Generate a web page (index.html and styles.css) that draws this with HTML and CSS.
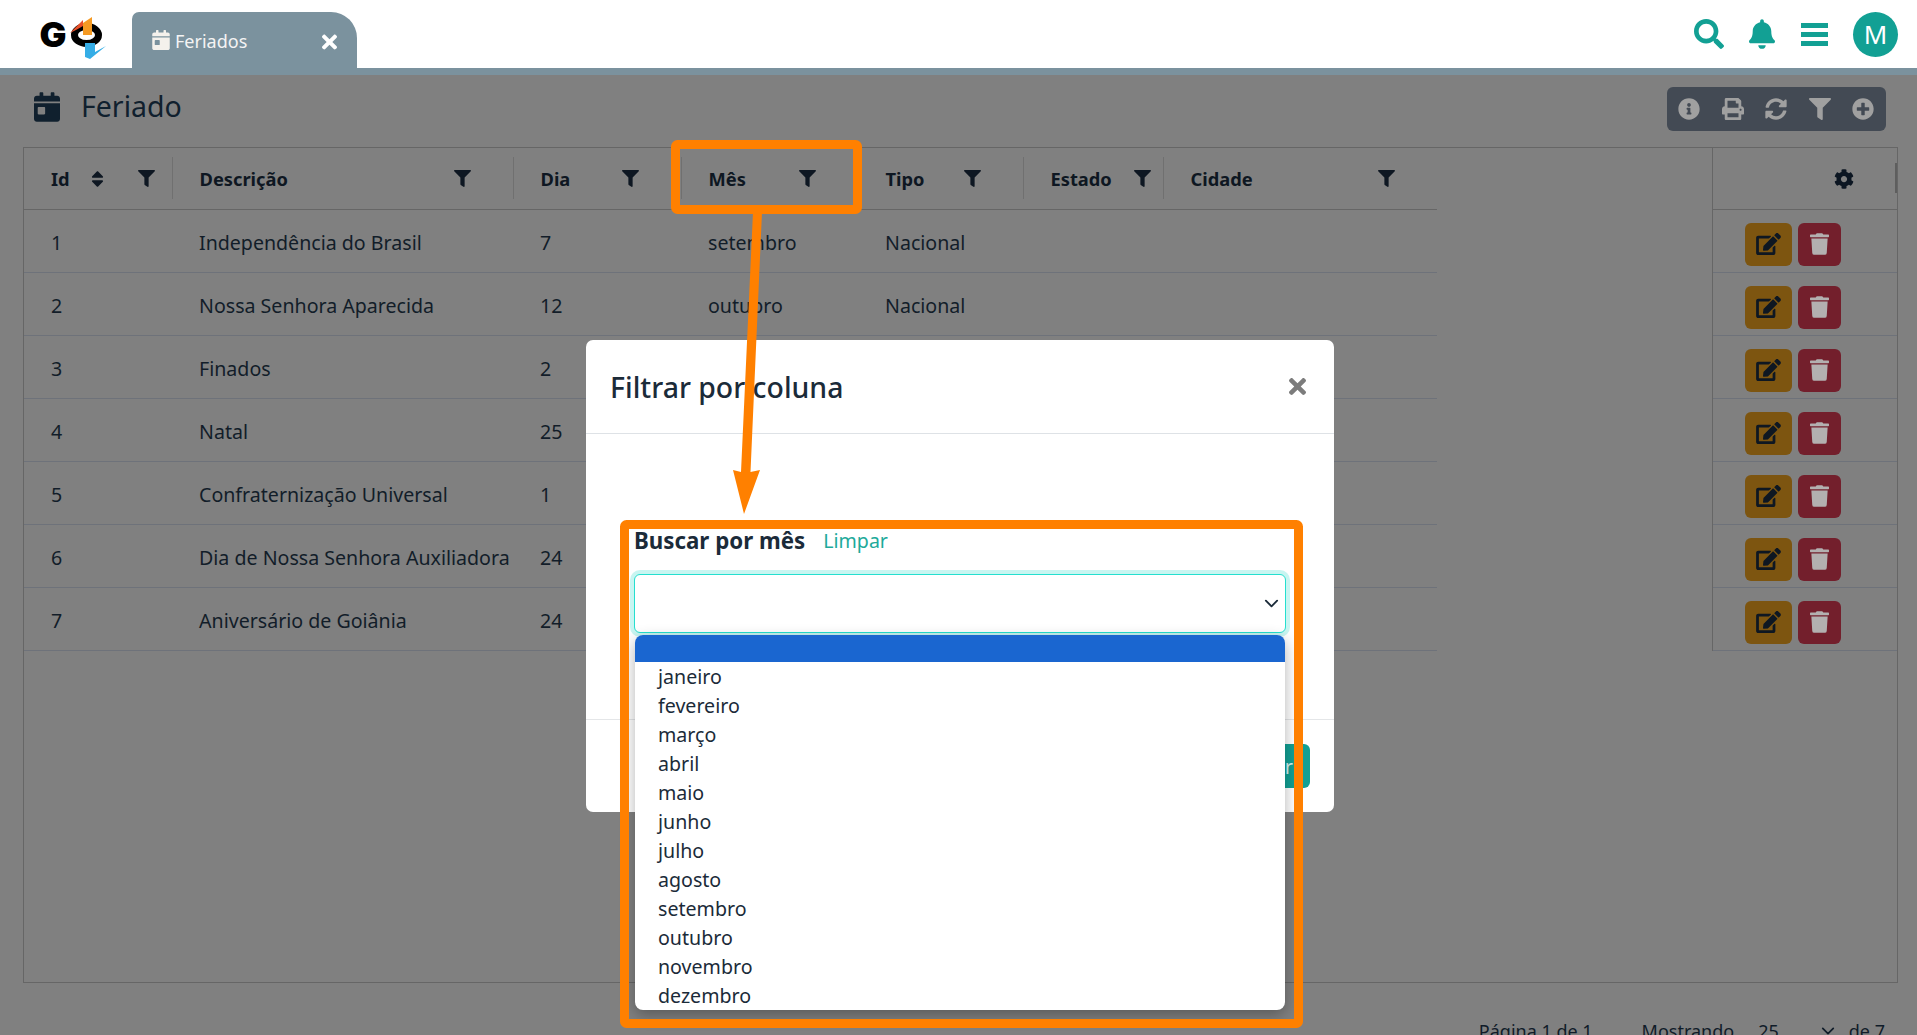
FILE: index.html
```html
<!DOCTYPE html>
<html lang="pt-BR">
<head>
<meta charset="utf-8">
<title>Feriados</title>
<link rel="stylesheet" href="styles.css">
</head>
<body>
<svg class="defs" width="0" height="0" aria-hidden="true">
  <symbol id="i-search" viewBox="0 0 512 512"><path d="M505 442.7L405.3 343c-4.5-4.5-10.6-7-17-7H372c27.6-35.3 44-79.7 44-128C416 93.1 322.9 0 208 0S0 93.1 0 208s93.1 208 208 208c48.3 0 92.7-16.4 128-44v16.3c0 6.4 2.5 12.5 7 17l99.7 99.7c9.4 9.4 24.6 9.4 33.9 0l28.3-28.3c9.4-9.4 9.4-24.6.1-34zM208 336c-70.7 0-128-57.2-128-128 0-70.7 57.2-128 128-128 70.7 0 128 57.2 128 128 0 70.7-57.2 128-128 128z"/></symbol>
  <symbol id="i-bell" viewBox="0 0 448 512"><path d="M224 512c35.32 0 63.97-28.65 63.97-64H160.03c0 35.35 28.65 64 63.97 64zm215.39-149.71c-19.32-20.76-55.47-51.99-55.47-154.29 0-77.7-54.48-139.9-127.94-155.16V32c0-17.67-14.32-32-31.98-32s-31.98 14.33-31.98 32v20.84C118.56 68.1 64.08 130.3 64.08 208c0 102.3-36.15 133.53-55.47 154.29-6 6.45-8.66 14.16-8.61 21.71.11 16.4 12.98 32 32.1 32h383.8c19.12 0 32-15.6 32.1-32 .05-7.55-2.61-15.27-8.61-21.71z"/></symbol>
  <symbol id="i-filter" viewBox="0 0 512 512"><path d="M487.976 0H24.028C2.71 0-8.047 25.866 7.058 40.971L192 225.941V432c0 7.831 3.821 15.17 10.237 19.662l80 55.98C298.02 518.69 320 507.493 320 487.98V225.941l184.947-184.97C520.021 25.896 509.338 0 487.976 0z"/></symbol>
  <symbol id="i-cal" viewBox="0 0 448 512"><path d="M0 464c0 26.5 21.5 48 48 48h352c26.5 0 48-21.5 48-48V192H0v272zm64-192c0-8.8 7.2-16 16-16h96c8.8 0 16 7.2 16 16v96c0 8.8-7.2 16-16 16H80c-8.8 0-16-7.2-16-16v-96zM400 64h-48V16c0-8.8-7.2-16-16-16h-32c-8.8 0-16 7.2-16 16v48H160V16c0-8.8-7.2-16-16-16h-32c-8.8 0-16 7.2-16 16v48H48C21.5 64 0 85.5 0 112v48h448v-48c0-26.5-21.5-48-48-48z"/></symbol>
  <symbol id="i-info" viewBox="0 0 512 512"><path d="M256 8C119.043 8 8 119.083 8 256c0 136.997 111.043 248 248 248s248-111.003 248-248C504 119.083 392.957 8 256 8zm0 110c23.196 0 42 18.804 42 42s-18.804 42-42 42-42-18.804-42-42 18.804-42 42-42zm56 254c0 6.627-5.373 12-12 12h-88c-6.627 0-12-5.373-12-12v-24c0-6.627 5.373-12 12-12h12v-64h-12c-6.627 0-12-5.373-12-12v-24c0-6.627 5.373-12 12-12h64c6.627 0 12 5.373 12 12v100h12c6.627 0 12 5.373 12 12v24z"/></symbol>
  <symbol id="i-print" viewBox="0 0 512 512"><path d="M448 192V77.25c0-8.49-3.37-16.62-9.37-22.63L393.37 9.37c-6-6-14.14-9.37-22.63-9.37H96C78.33 0 64 14.33 64 32v160c-35.35 0-64 28.65-64 64v112c0 8.84 7.16 16 16 16h48v96c0 17.67 14.33 32 32 32h320c17.67 0 32-14.33 32-32v-96h48c8.84 0 16-7.16 16-16V256c0-35.35-28.65-64-64-64zm-64 256H128v-96h256v96zm0-224H128V64h192v48c0 8.84 7.16 16 16 16h48v96zm48 72c-13.25 0-24-10.75-24-24 0-13.26 10.75-24 24-24s24 10.74 24 24c0 13.25-10.75 24-24 24z"/></symbol>
  <symbol id="i-sync" viewBox="0 0 512 512"><path d="M370.72 133.28C339.458 104.008 298.888 87.962 255.848 88c-77.458.068-144.328 53.178-162.791 126.85-1.344 5.363-6.122 9.15-11.651 9.15H24.103c-7.498 0-13.194-6.807-11.807-14.176C33.933 94.924 134.813 8 256 8c66.448 0 126.791 26.136 171.315 68.685L463.03 40.97C478.149 25.851 504 36.559 504 57.941V192c0 13.255-10.745 24-24 24H345.941c-21.382 0-32.09-25.851-16.971-40.971l41.75-41.749zM32 296h134.059c21.382 0 32.09 25.851 16.971 40.971l-41.75 41.75c31.262 29.273 71.835 45.319 114.876 45.28 77.418-.07 144.315-53.144 162.787-126.849 1.344-5.363 6.122-9.15 11.651-9.15h57.304c7.498 0 13.194 6.807 11.807 14.176C478.067 417.076 377.187 504 256 504c-66.448 0-126.791-26.136-171.315-68.685L48.97 471.03C33.851 486.149 8 475.441 8 454.059V320c0-13.255 10.745-24 24-24z"/></symbol>
  <symbol id="i-plus" viewBox="0 0 512 512"><path d="M256 8C119 8 8 119 8 256s111 248 248 248 248-111 248-248S393 8 256 8zm144 276c0 6.6-5.4 12-12 12h-92v92c0 6.6-5.4 12-12 12h-56c-6.6 0-12-5.4-12-12v-92h-92c-6.6 0-12-5.4-12-12v-56c0-6.6 5.4-12 12-12h92v-92c0-6.6 5.4-12 12-12h56c6.6 0 12 5.4 12 12v92h92c6.6 0 12 5.4 12 12v56z"/></symbol>
  <symbol id="i-cog" viewBox="0 0 512 512"><path d="M487.4 315.7l-42.6-24.6c4.3-23.2 4.3-47 0-70.2l42.6-24.6c4.9-2.8 7.1-8.6 5.5-14-11.1-35.6-30-67.8-54.7-94.6-3.8-4.1-10-5.1-14.8-2.3L380.8 110c-17.9-15.4-38.5-27.3-60.8-35.1V25.8c0-5.6-3.9-10.5-9.4-11.7-36.7-8.2-74.3-7.8-109.2 0-5.5 1.2-9.4 6.1-9.4 11.7V75c-22.2 7.9-42.8 19.8-60.8 35.1L88.7 85.5c-4.9-2.8-11-1.9-14.8 2.3-24.7 26.7-43.6 58.9-54.7 94.6-1.7 5.4.6 11.2 5.5 14L67.3 221c-4.3 23.2-4.3 47 0 70.2l-42.6 24.6c-4.9 2.8-7.1 8.6-5.5 14 11.1 35.6 30 67.8 54.7 94.6 3.8 4.1 10 5.1 14.8 2.3l42.6-24.6c17.9 15.4 38.5 27.3 60.8 35.1v49.2c0 5.6 3.9 10.5 9.4 11.7 36.7 8.2 74.3 7.8 109.2 0 5.5-1.2 9.4-6.1 9.4-11.7v-49.2c22.2-7.9 42.8-19.8 60.8-35.1l42.6 24.6c4.9 2.8 11 1.9 14.8-2.3 24.7-26.7 43.6-58.9 54.7-94.6 1.5-5.5-.7-11.3-5.6-14.1zM256 336c-44.1 0-80-35.9-80-80s35.9-80 80-80 80 35.9 80 80-35.9 80-80 80z"/></symbol>
  <symbol id="i-edit" viewBox="0 0 576 512"><path d="M402.6 83.2l90.2 90.2c3.8 3.8 3.8 10 0 13.8L274.4 405.6l-92.8 10.3c-12.4 1.4-22.9-9.1-21.5-21.5l10.3-92.8L388.8 83.2c3.8-3.8 10-3.8 13.8 0zm162-22.9l-48.8-48.8c-15.2-15.2-39.9-15.2-55.2 0l-35.4 35.4c-3.8 3.8-3.8 10 0 13.8l90.2 90.2c3.8 3.8 10 3.8 13.8 0l35.4-35.4c15.2-15.3 15.2-40 0-55.2zM384 346.2V448H64V128h229.8c3.2 0 6.2-1.3 8.5-3.5l40-40c7.6-7.6 2.2-20.5-8.5-20.5H48C21.5 64 0 85.5 0 112v352c0 26.5 21.5 48 48 48h352c26.5 0 48-21.5 48-48V306.2c0-10.7-12.9-16-20.5-8.5l-40 40c-2.2 2.3-3.5 5.3-3.5 8.5z"/></symbol>
  <symbol id="i-trash" viewBox="0 0 448 512"><path d="M432 32H312l-9.4-18.7A24 24 0 0 0 281.1 0H166.8a23.72 23.72 0 0 0-21.4 13.3L136 32H16A16 16 0 0 0 0 48v32a16 16 0 0 0 16 16h416a16 16 0 0 0 16-16V48a16 16 0 0 0-16-16zM53.2 467a48 48 0 0 0 47.9 45h245.8a48 48 0 0 0 47.9-45L416 128H32z"/></symbol>
  <symbol id="i-times" viewBox="0 0 352 512"><path d="M242.72 256l100.07-100.07c12.28-12.28 12.28-32.19 0-44.48l-22.24-22.24c-12.28-12.28-32.19-12.28-44.48 0L176 189.28 75.93 89.21c-12.28-12.28-32.19-12.28-44.48 0L9.21 111.45c-12.28 12.28-12.28 32.19 0 44.48L109.28 256 9.21 356.07c-12.28 12.28-12.28 32.19 0 44.48l22.24 22.24c12.28 12.28 32.2 12.28 44.48 0L176 322.72l100.07 100.07c12.28 12.28 32.2 12.28 44.48 0l22.24-22.24c12.28-12.28 12.28-32.19 0-44.48L242.72 256z"/></symbol>
  <symbol id="i-sort" viewBox="0 0 320 512"><path d="M41 288h238c21.4 0 32.1 25.9 17 41L177 448c-9.4 9.4-24.6 9.4-33.9 0L24 329c-15.1-15.1-4.4-41 17-41zm255-105L177 64c-9.4-9.4-24.6-9.4-33.9 0L24 183c-15.1 15.1-4.4 41 17 41h238c21.4 0 32.1-25.9 17-41z"/></symbol>
  <symbol id="i-chev" viewBox="0 0 16 16"><path d="M2 5l6 6 6-6" fill="none" stroke="currentColor" stroke-width="2" stroke-linecap="round" stroke-linejoin="round"/></symbol>
</svg>

<header class="topbar">
  <div class="logo">
    <svg class="logo-svg" viewBox="0 0 90 60">
      <text class="logo-g" x="9.5" y="37" textLength="27" lengthAdjust="spacingAndGlyphs">G</text>
      <ellipse cx="56.5" cy="25" rx="12" ry="8.5" fill="none" stroke="#000" stroke-width="7"/>
      <path d="M40 23l13-13v6l-7 4z" fill="#e8502a"/>
      <path d="M53 13l9-6v18h-9z" fill="#f59a23"/>
      <path d="M55 33h10v9l11-6-16 13-5-2z" fill="#35ade6"/>
    </svg>
  </div>
  <div class="tab">
    <svg class="tab-cal"><use href="#i-cal"/></svg>
    <span class="tab-label">Feriados</span>
    <svg class="tab-x"><use href="#i-times"/></svg>
  </div>
  <div class="top-actions">
    <svg class="ti ti-search"><use href="#i-search"/></svg>
    <svg class="ti ti-bell"><use href="#i-bell"/></svg>
    <div class="ti-bars"><span></span><span></span><span></span></div>
    <div class="avatar">M</div>
  </div>
</header>
<div class="strip"></div>

<main class="page">
  <div class="title-row">
    <h1 class="title"><svg class="title-cal"><use href="#i-cal"/></svg>Feriado</h1>
    <div class="toolbar">
      <svg class="tb"><use href="#i-info"/></svg>
      <svg class="tb"><use href="#i-print"/></svg>
      <svg class="tb"><use href="#i-sync"/></svg>
      <svg class="tb"><use href="#i-filter"/></svg>
      <svg class="tb"><use href="#i-plus"/></svg>
    </div>
  </div>

  <section class="card">
    <table class="data">
      <colgroup>
        <col class="c-id"><col class="c-desc"><col class="c-dia"><col class="c-mes"><col class="c-tipo"><col class="c-est"><col class="c-cid">
      </colgroup>
      <thead>
        <tr>
          <th><div class="th first"><span class="th-l">Id<svg class="sort"><use href="#i-sort"/></svg></span><svg class="flt"><use href="#i-filter"/></svg></div></th>
          <th><div class="th"><span>Descrição</span><svg class="flt"><use href="#i-filter"/></svg></div></th>
          <th><div class="th"><span>Dia</span><svg class="flt"><use href="#i-filter"/></svg></div></th>
          <th><div class="th"><span>Mês</span><svg class="flt"><use href="#i-filter"/></svg></div></th>
          <th><div class="th"><span>Tipo</span><svg class="flt"><use href="#i-filter"/></svg></div></th>
          <th><div class="th tight"><span>Estado</span><svg class="flt"><use href="#i-filter"/></svg></div></th>
          <th><div class="th"><span>Cidade</span><svg class="flt"><use href="#i-filter"/></svg></div></th>
        </tr>
      </thead>
      <tbody>
        <tr><td>1</td><td>Independência do Brasil</td><td>7</td><td>setembro</td><td>Nacional</td><td></td><td></td></tr>
        <tr><td>2</td><td>Nossa Senhora Aparecida</td><td>12</td><td>outubro</td><td>Nacional</td><td></td><td></td></tr>
        <tr><td>3</td><td>Finados</td><td>2</td><td>novembro</td><td>Nacional</td><td></td><td></td></tr>
        <tr><td>4</td><td>Natal</td><td>25</td><td>dezembro</td><td>Nacional</td><td></td><td></td></tr>
        <tr><td>5</td><td>Confraternização Universal</td><td>1</td><td>janeiro</td><td>Nacional</td><td></td><td></td></tr>
        <tr><td>6</td><td>Dia de Nossa Senhora Auxiliadora</td><td>24</td><td>maio</td><td>Municipal</td><td></td><td></td></tr>
        <tr><td>7</td><td>Aniversário de Goiânia</td><td>24</td><td>outubro</td><td>Municipal</td><td></td><td></td></tr>
      </tbody>
    </table>
    <div class="actions">
      <div class="act-head"><svg class="cog"><use href="#i-cog"/></svg><span class="tick"></span></div>
      <div class="act-row"><button class="btn-e"><svg class="ed"><use href="#i-edit"/></svg></button><button class="btn-d"><svg class="tr"><use href="#i-trash"/></svg></button></div>
      <div class="act-row"><button class="btn-e"><svg class="ed"><use href="#i-edit"/></svg></button><button class="btn-d"><svg class="tr"><use href="#i-trash"/></svg></button></div>
      <div class="act-row"><button class="btn-e"><svg class="ed"><use href="#i-edit"/></svg></button><button class="btn-d"><svg class="tr"><use href="#i-trash"/></svg></button></div>
      <div class="act-row"><button class="btn-e"><svg class="ed"><use href="#i-edit"/></svg></button><button class="btn-d"><svg class="tr"><use href="#i-trash"/></svg></button></div>
      <div class="act-row"><button class="btn-e"><svg class="ed"><use href="#i-edit"/></svg></button><button class="btn-d"><svg class="tr"><use href="#i-trash"/></svg></button></div>
      <div class="act-row"><button class="btn-e"><svg class="ed"><use href="#i-edit"/></svg></button><button class="btn-d"><svg class="tr"><use href="#i-trash"/></svg></button></div>
      <div class="act-row"><button class="btn-e"><svg class="ed"><use href="#i-edit"/></svg></button><button class="btn-d"><svg class="tr"><use href="#i-trash"/></svg></button></div>
    </div>
  </section>

  <footer class="pager">
    <span class="pg-info">Página 1 de 1</span>
    <span class="pg-show">Mostrando</span>
    <span class="pg-size">25</span>
    <svg class="pg-chev"><use href="#i-chev"/></svg>
    <span>de 7</span>
  </footer>
</main>

<div class="modal">
  <div class="m-head">
    <h2 class="m-title">Filtrar por coluna</h2>
    <svg class="m-x"><use href="#i-times"/></svg>
  </div>
  <div class="m-body">
    <div class="m-label"><b>Buscar por mês</b><a class="m-clear">Limpar</a></div>
    <div class="m-select"><svg class="m-chev"><use href="#i-chev"/></svg></div>
  </div>
  <div class="m-foot"><button class="m-btn">Filtrar</button></div>
</div>

<ul class="drop">
  <li class="sel"></li>
  <li>janeiro</li><li>fevereiro</li><li>março</li><li>abril</li><li>maio</li><li>junho</li>
  <li>julho</li><li>agosto</li><li>setembro</li><li>outubro</li><li>novembro</li><li>dezembro</li>
</ul>

<svg class="marks" viewBox="0 0 1917 1035" aria-hidden="true">
  <rect class="frame" x="675.5" y="144.5" width="182" height="65" rx="2"/>
  <rect class="frame" x="624.5" y="524.5" width="674" height="499" rx="2"/>
  <polygon class="arrow" points="753,212 762,212 750.5,472 760,470 744,514 733,470 741,472"/>
</svg>
</body>
</html>
```
FILE: styles.css
```css
* { box-sizing: border-box; }
html, body { margin: 0; height: 1035px; overflow: hidden; }
body {
  position: relative;
  display: flex;
  flex-direction: column;
  font-family: "Noto Sans", "Open Sans", sans-serif;
  font-size: 19.6px;
  color: #121d29;
  background: #808080;
}
.defs { position: absolute; }
svg { fill: currentColor; display: block; flex: none; }

/* top bar */
.topbar { height: 68px; background: #fff; display: flex; align-items: flex-end; flex: none; }
.logo { width: 132px; height: 68px; flex: none; }
.logo-svg { width: 90px; height: 60px; margin: 10px 0 0 30px; }
.logo-g { font-family: "Inter", "Noto Sans", sans-serif; font-weight: 900; font-size: 34px; fill: #000; }
.tab {
  width: 225px; height: 56px; background: #7b929e; color: #fff;
  border-radius: 7px 26px 0 0; display: flex; align-items: center;
  padding: 0 20px;
}
.tab-cal { width: 18px; height: 20px; margin-right: 5px; color: #f4f1ec; }
.tab-label { font-size: 18px; flex: 1; color: #f4f4f4; padding-top: 2px; }
.tab-x { width: 15px; height: 22px; margin-top: 4px; }
.top-actions {
  margin-left: auto; height: 68px; padding-right: 19px;
  display: flex; align-items: center; color: #12a094;
}
.ti-search { width: 30px; height: 30px; margin-right: 25px; }
.ti-bell { width: 26px; height: 30px; margin-right: 26px; }
.ti-bars { width: 27px; display: flex; flex-direction: column; gap: 4px; margin-right: 25px; }
.ti-bars span { height: 5px; background: #12a094; }
.avatar {
  width: 45px; height: 45px; border-radius: 50%; background: #12a094; color: #fff;
  display: flex; align-items: center; justify-content: center; font-size: 26px;
}
.strip { height: 7px; background: #7b929e; flex: none; }

/* page */
.page { flex: 1; min-height: 0; display: flex; flex-direction: column; overflow: hidden; }
.title-row { height: 72px; flex: none; display: flex; justify-content: space-between; padding: 0 31px 0 34px; }
.title {
  margin: 12px 0 0; height: 37px; display: flex; align-items: center;
  font-size: 28.5px; font-weight: 400; color: #10202e;
}
.title-cal { width: 26px; height: 30px; margin-right: 21px; margin-top: 2px; }
.toolbar {
  margin-top: 12px; width: 219px; height: 44px; background: #434a54; border-radius: 6px;
  display: flex; align-items: center; padding-left: 11px; gap: 21.5px; color: #a0a0a0;
}
.tb { width: 22px; height: 22px; }

/* table card */
.card {
  flex: none; height: 836px; margin: 0 19px 0 23px; border: 1px solid #666;
  display: flex;
}
.data { width: 1413px; height: 503px; border-collapse: collapse; table-layout: fixed; flex: none; }
.c-id { width: 148px; } .c-desc { width: 341px; } .c-dia { width: 168px; }
.c-mes { width: 177px; } .c-tipo { width: 165px; } .c-est { width: 140px; } .c-cid { width: 274px; }
.data th { height: 61px; padding: 0; border-bottom: 1px solid #666; text-align: left; }
.th {
  height: 42px; display: flex; align-items: center; justify-content: space-between;
  border-left: 1px solid #707070; padding: 1px 42px 0 26.5px; font-size: 18.3px; font-weight: 700;
  color: #0e1722;
}
.th.first { border-left: 0; padding: 1px 17px 0 27px; }
.th.tight { padding-right: 12px; }
.th-l { display: flex; align-items: center; }
.sort { width: 13px; height: 20px; margin-left: 21px; }
.flt { width: 17px; height: 17px; margin-top: -1px; }
.data td {
  height: 63px; padding: 3px 0 0 27px; border-bottom: 1px solid #6e727a; white-space: nowrap;
  font-size: 19.6px;
}
.actions { margin-left: auto; width: 185px; height: 503px; border-left: 1px solid #666; flex: none; }
.act-head {
  height: 62px; border-bottom: 1px solid #666; display: flex; align-items: center;
  justify-content: flex-end; padding-right: 43px; position: relative;
}
.cog { width: 20px; height: 20px; color: #0c1622; }
.tick { position: absolute; right: 0; top: 15px; width: 2px; height: 30px; background: #5e5e5e; }
.act-row {
  height: 63px; border-bottom: 1px solid #6e727a; display: flex; align-items: center;
  padding: 6px 0 0 32px; gap: 6px;
}
.act-row button { height: 43px; border: 0; border-radius: 6px; padding: 0; display: flex; align-items: center; justify-content: center; }
.btn-e { width: 47px; background: #7d5510; color: #0e1722; }
.btn-d { width: 43px; background: #731f2c; color: #b3b0b0; }
.ed { width: 25px; height: 22px; }
.tr { width: 19px; height: 22px; }

/* pager */
.pager {
  flex: none; margin-top: 34px; padding-right: 32px; display: flex; justify-content: flex-end;
  align-items: center; height: 27px; font-size: 18px; color: #101c29;
}
.pg-info { margin-right: 49px; }
.pg-show { margin-right: 24px; }
.pg-size { margin-right: 42px; }
.pg-chev { width: 14px; height: 14px; margin-right: 14px; }

/* modal */
.modal {
  position: absolute; left: 586px; top: 340px; width: 748px; height: 472px;
  background: #fff; border-radius: 7px; display: flex; flex-direction: column;
  color: #1b2b39;
}
.m-head {
  height: 94px; flex: none; border-bottom: 1px solid #dee2e6; display: flex;
  align-items: center; justify-content: space-between; padding: 0 28px 0 24px;
}
.m-title { margin: 0; font-size: 28.4px; font-weight: 500; }
.m-x { width: 17px; height: 25px; color: #7c7c7c; }
.m-body { flex: 1; padding: 89px 48px 0 48px; }
.m-label { height: 34px; display: flex; align-items: center; font-size: 22.3px; }
.m-label b { font-weight: 700; margin-left: 0; }
.m-clear { color: #1eaa9b; margin-left: 18px; font-size: 19.6px; }
.m-select {
  margin-top: 17px; height: 59px; border: 1px solid #25dfcf; border-radius: 6px;
  box-shadow: 0 0 0 4px #c8f5f1; display: flex; align-items: center; justify-content: flex-end;
  padding-right: 6px; background: #fff;
}
.m-chev { width: 15px; height: 15px; color: #1b2b39; }
.m-foot {
  height: 93px; flex: none; border-top: 1px solid #e4e6e8; display: flex;
  align-items: center; justify-content: flex-end; padding-right: 24px;
}
.m-btn {
  width: 88px; height: 44px; border: 0; border-radius: 6px; background: #12a094;
  color: #d8f3f0; font: 20px "Noto Sans", sans-serif; text-align: right; padding: 0 17px 0 0;
}

/* dropdown of the open select */
.drop {
  position: absolute; left: 635px; top: 635px; width: 650px; height: 375px;
  margin: 0; padding: 0; list-style: none; background: #fff; overflow: hidden;
  border-radius: 8px; box-shadow: 0 5px 15px rgba(0, 0, 0, .3); color: #1b2b39;
}
.drop li { height: 29px; line-height: 29px; padding-left: 23px; font-size: 19.6px; }
.drop li.sel { height: 27px; background: #1a66d0; }

/* annotations */
.marks { position: absolute; left: 0; top: 0; width: 1917px; height: 1035px; pointer-events: none; }
.frame { fill: none; stroke: #ff8000; stroke-width: 9; }
.arrow { fill: #ff8000; }
```
